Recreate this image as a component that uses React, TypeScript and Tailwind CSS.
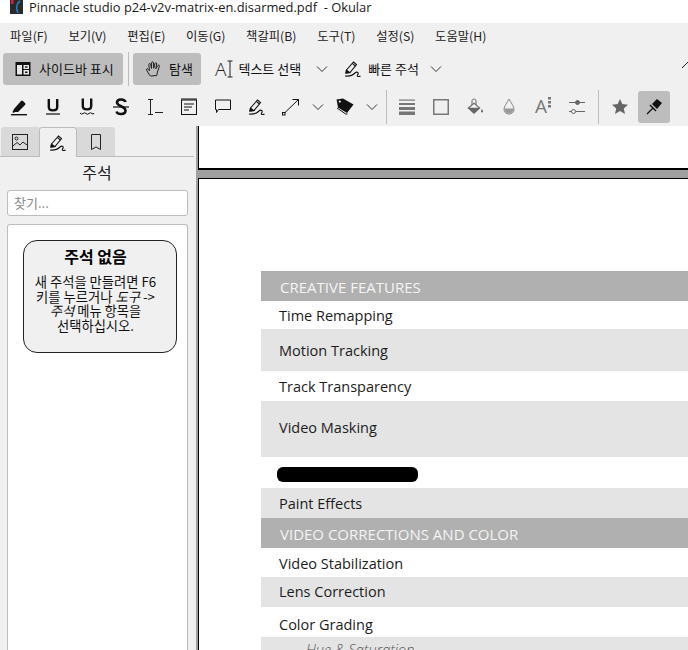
import type { ReactNode } from "react";

const KR = "font-['Noto_Sans_CJK_KR','Noto_Sans',sans-serif]";

function Chevron() {
  return (
    <svg width="12" height="8" viewBox="0 0 12 8" fill="none" stroke="#333" strokeWidth="1">
      <path d="M1 1.5 L6 6.5 L11 1.5" />
    </svg>
  );
}

function Freehand() {
  return (
    <svg width="18" height="18" viewBox="0 0 18 18" fill="none" stroke="#111" strokeWidth="1.1">
      <path d="M2.5 10 L9.5 2 L12.5 4.5 L6 12.5 L2 13 Z" />
      <path d="M8.3 3.4 L11.4 6" />
      <path d="M2.5 10.2 L5.8 12.6 L2 13 Z" fill="#111" />
      <path d="M1 16 C5 16.5 9 15 11 13 C13 11 15.5 13 13.5 15 C12.5 16.5 15 17 16.5 16" />
    </svg>
  );
}

function IconButton({ children, w = "w-[34px]" }: { children: ReactNode; w?: string }) {
  return <div className={`${w} h-[32px] flex items-center justify-center shrink-0`}>{children}</div>;
}

function Row({ h, gray, children }: { h: string; gray?: boolean; children: ReactNode }) {
  return (
    <div className={`${h} ${gray ? "bg-[#e4e4e4]" : "bg-white"} pl-[18px] pt-[2px] flex items-center text-[14.5px] text-[#1c1c1c]`}>
      {children}
    </div>
  );
}

function Header({ children }: { children: ReactNode }) {
  return (
    <div className="h-[30px] bg-[#b0b0b0] pl-[19px] pt-[2px] flex items-center text-[15px] text-[#f4f4f4]">{children}</div>
  );
}

const menus = ["파일(F)", "보기(V)", "편집(E)", "이동(G)", "책갈피(B)", "도구(T)", "설정(S)", "도움말(H)"];

export default function App() {
  return (
    <div className={`w-[688px] h-[650px] overflow-hidden flex flex-col bg-[#f0f0f0] text-[#111] ${KR}`}>
      {/* title bar */}
      <div className="h-[23px] bg-white flex shrink-0">
        <svg width="14" height="14" viewBox="0 0 14 14" className="ml-[10px]">
          <rect width="13" height="14" fill="#2a2a2a" />
          <rect x="1" width="2.5" height="4" fill="#c8243c" />
          <path d="M10 1 C6 4 6 9 8 13" fill="none" stroke="#1f7fd0" strokeWidth="1.6" />
        </svg>
        <span className="ml-[5px] text-[12.9px] leading-[15px] whitespace-pre font-['Open_Sans',sans-serif] text-[#1a1a1a]">
          Pinnacle studio p24-v2v-matrix-en.disarmed.pdf  - Okular
        </span>
      </div>

      {/* menu bar */}
      <div className="h-[27px] pl-[10px] flex items-center gap-[20.7px] text-[12.3px] text-[#222] shrink-0">
        {menus.map((m) => (
          <span key={m}>{m}</span>
        ))}
      </div>

      {/* main toolbar */}
      <div className="h-[39px] pl-[3px] pt-[3px] flex items-start shrink-0 relative text-[13px]">
        <div className="w-[120px] h-[32px] bg-[#bdbdbd] rounded-[3px] flex items-center pl-[12px] gap-[8px]">
          <svg width="16" height="16" viewBox="0 0 16 16">
            <rect x="0.5" y="1" width="15" height="14" fill="#111" />
            <rect x="2" y="4" width="5" height="9.5" fill="#e8e8e8" />
            <rect x="8.5" y="4" width="5.5" height="4" fill="#e8e8e8" />
            <rect x="10" y="5.3" width="2.5" height="1.4" fill="#111" />
            <rect x="8.5" y="9" width="5.5" height="4.5" fill="#e8e8e8" />
            <rect x="10" y="10.5" width="2.5" height="1.5" fill="#111" />
          </svg>
          <span>사이드바 표시</span>
        </div>
        <div className="w-px h-[34px] bg-[#bcbcbc] ml-[5px] -mt-[1px]" />
        <div className="w-[68px] h-[32px] ml-[4px] bg-[#bdbdbd] rounded-[3px] flex items-center pl-[12px] gap-[7px]">
          <svg width="17" height="18" viewBox="0 0 17 18" fill="none" stroke="#222" strokeWidth="1">
            <path d="M4.5 15 L1.5 10 C1 8.8 2.5 8.3 3.2 9.2 L4.5 10.8 L3.8 4.5 C3.7 3.2 5.5 3.2 5.7 4.4 L6.5 8.5 L6.6 2.8 C6.7 1.5 8.4 1.5 8.5 2.8 L8.7 8.3 L10 3.5 C10.3 2.3 12 2.7 11.7 4 L10.8 8.8 L12.8 5.5 C13.5 4.6 14.9 5.2 14.4 6.4 L12.4 12 L11.8 15.5 L5.5 16 Z" />
          </svg>
          <span>탐색</span>
        </div>
        <div className="flex items-center h-[32px] ml-[14px]">
          <span className="text-[19px] leading-none text-[#222] font-['Open_Sans',sans-serif] font-light">A</span>
          <svg width="6" height="18" viewBox="0 0 6 18" stroke="#222" fill="none" className="ml-[1px]">
            <path d="M0.5 1 H5.5 M3 1 V17 M0.5 17 H5.5" />
          </svg>
          <span className="ml-[5px]">텍스트 선택</span>
          <span className="ml-[15px] flex"><Chevron /></span>
          <span className="ml-[16px] flex"><Freehand /></span>
          <span className="ml-[6px]">빠른 주석</span>
          <span className="ml-[11px] flex"><Chevron /></span>
        </div>
        <svg width="6" height="8" viewBox="0 0 6 8" stroke="#222" fill="none" className="absolute right-0 top-[11px]">
          <path d="M0 7 L6 1" />
        </svg>
      </div>

      {/* annotation toolbar */}
      <div className="h-[35px] pl-[2px] flex items-center shrink-0">
        <IconButton>
          <svg width="18" height="18" viewBox="0 0 18 18">
            <path d="M4 11 L11 3 Q12 2 13 3 L15 5 Q16 6 15 7 L8 14 L5 14 L3.5 15 L2.5 14 Z" fill="#111" />
            <rect x="1" y="16" width="16" height="1.4" fill="#111" />
          </svg>
        </IconButton>
        <IconButton>
          <svg width="16" height="18" viewBox="0 0 16 18" fill="none" stroke="#111">
            <path d="M3.8 1 V9 C3.8 13.5 12.2 13.5 12.2 9 V1" strokeWidth="2.4" />
            <path d="M1 16 H15" strokeWidth="1.2" />
          </svg>
        </IconButton>
        <IconButton>
          <svg width="16" height="18" viewBox="0 0 16 18" fill="none" stroke="#111">
            <path d="M3.8 0.5 V8 C3.8 12.5 12.2 12.5 12.2 8 V0.5" strokeWidth="2.4" />
            <path d="M1 15 Q2.5 17 4 15.5 T7 15.5 T10 15.5 T13 15.5 T15 15" strokeWidth="1" />
          </svg>
        </IconButton>
        <IconButton>
          <svg width="16" height="18" viewBox="0 0 16 18" fill="none" stroke="#111">
            <path d="M12.5 4 C11.5 0.5 4 0.5 4 4.5 C4 8.5 12.5 8 12.5 12.5 C12.5 17 4.5 17 3.5 13.5" strokeWidth="2.6" />
            <path d="M0 9 H16" strokeWidth="1.2" stroke="#111" />
          </svg>
        </IconButton>
        <IconButton>
          <svg width="16" height="18" viewBox="0 0 16 18" fill="none" stroke="#222" strokeWidth="1">
            <path d="M1 1.5 H6 M3.5 1.5 V16.5 M1 16.5 H6 M8 14.5 H16" />
          </svg>
        </IconButton>
        <IconButton>
          <svg width="16" height="17" viewBox="0 0 16 17" fill="none" stroke="#111" strokeWidth="1">
            <rect x="0.5" y="2" width="15" height="14.5" />
            <path d="M0.5 1 H15.5" strokeDasharray="1 1" strokeWidth="2" />
            <path d="M3 6 H13 M3 9 H11 M3 12 H8" />
          </svg>
        </IconButton>
        <IconButton>
          <svg width="16" height="15" viewBox="0 0 16 15" fill="none" stroke="#111" strokeWidth="1">
            <path d="M0.5 1 H15.5 V10.5 H3.5 L1.5 13.5 V10.5 H0.5 Z" />
          </svg>
        </IconButton>
        <IconButton>
          <Freehand />
        </IconButton>
        <IconButton>
          <svg width="18" height="18" viewBox="0 0 18 18" fill="none" stroke="#111" strokeWidth="1">
            <rect x="0.5" y="14.5" width="2.5" height="2.5" />
            <path d="M3 14.5 L16.5 1.5 M10.5 1.5 H16.5 V7.5" />
          </svg>
        </IconButton>
        <IconButton w="w-[20px]">
          <Chevron />
        </IconButton>
        <IconButton>
          <svg width="18" height="17" viewBox="0 0 18 17">
            <path d="M0.5 1.5 L7 0.5 L17.5 6.5 L11 15 L2 9.5 Z" fill="#111" />
            <circle cx="3.8" cy="3.6" r="1.1" fill="#f0f0f0" />
            <path d="M1 10 L10 16.2 L11.5 15.8" stroke="#111" fill="none" />
          </svg>
        </IconButton>
        <IconButton w="w-[20px]">
          <Chevron />
        </IconButton>
        <div className="w-px h-[34px] bg-[#bcbcbc] ml-[4px] mr-[3px]" />
        <IconButton>
          <svg width="16" height="16" viewBox="0 0 16 16" fill="#777">
            <rect y="0.5" width="16" height="1.2" />
            <rect y="4" width="16" height="2" />
            <rect y="8" width="16" height="3" />
            <rect y="12.5" width="16" height="3.5" />
          </svg>
        </IconButton>
        <IconButton>
          <svg width="16" height="16" viewBox="0 0 16 16" fill="none" stroke="#777" strokeWidth="1.5">
            <rect x="0.75" y="0.75" width="14.5" height="14.5" />
          </svg>
        </IconButton>
        <IconButton>
          <svg width="17" height="18" viewBox="0 0 17 18">
            <path d="M5 7 V3 C5 0.5 9 0.5 9 3 V7" fill="none" stroke="#666" />
            <path d="M7 4.5 L13.5 10 L7 16 L0.5 10 Z" fill="#666" />
            <path d="M7 6 L11.5 9.7 H2.5 Z" fill="#f4f4f4" />
            <path d="M15 11 C13.8 13 13.8 14.5 15 14.5 C16.2 14.5 16.2 13 15 11 Z" fill="#555" />
          </svg>
        </IconButton>
        <IconButton>
          <svg width="12" height="17" viewBox="0 0 12 17">
            <path d="M6 1 C4 5 1 8 1 11.5 C1 14.5 3.5 16 6 16 C8.5 16 11 14.5 11 11.5 C11 8 8 5 6 1 Z" fill="#f0f0f0" stroke="#888" />
            <path d="M1.5 10.5 H10.5 C11 14 8.5 15.5 6 15.5 C3.5 15.5 1 14 1.5 10.5 Z" fill="#999" />
          </svg>
        </IconButton>
        <IconButton>
          <div className="flex items-start">
            <span className="text-[19px] leading-none text-[#777] font-['Open_Sans',sans-serif]">A</span>
            <svg width="3" height="12" viewBox="0 0 3 12" fill="#777" className="ml-[1px]">
              <rect width="3" height="2.5" />
              <rect y="4" width="3" height="2.5" />
              <rect y="8" width="3" height="2.5" />
            </svg>
          </div>
        </IconButton>
        <IconButton>
          <svg width="16" height="16" viewBox="0 0 16 16" fill="none" stroke="#666">
            <path d="M0 3.5 H16 M0 12.5 H2.5 M6.5 12.5 H16" />
            <circle cx="8.5" cy="3.5" r="2" fill="#666" />
            <circle cx="4.5" cy="12.5" r="2" />
          </svg>
        </IconButton>
        <div className="w-px h-[34px] bg-[#bcbcbc] ml-[4px] mr-[4px]" />
        <IconButton>
          <svg width="16" height="15" viewBox="0 0 16 15" fill="#666">
            <path d="M8 0 L10.3 5 L16 5.7 L11.8 9.4 L13 15 L8 12.1 L3 15 L4.2 9.4 L0 5.7 L5.7 5 Z" />
          </svg>
        </IconButton>
        <div className="w-[32px] h-[32px] ml-[1px] bg-[#bdbdbd] rounded-[3px] flex items-center justify-center">
          <svg width="17" height="17" viewBox="0 0 17 17">
            <path d="M6 6 L11 1 L16 5 L11 11 Z" fill="#111" />
            <path d="M4 7 L10 13" stroke="#111" strokeWidth="1.4" />
            <path d="M7 10 L1 16" stroke="#111" strokeWidth="1.2" />
          </svg>
        </div>
      </div>

      <div className="flex-1 min-h-0 flex mt-[2px]">
        {/* sidebar */}
        <div className="w-[194px] shrink-0 flex flex-col">
          <div className="h-[31px] pl-px pt-[2px] flex items-end border-b border-[#bcbcbc]">
            <div className="w-[38px] h-[29px] bg-[#d9d9d9] rounded-tl-[3px] flex items-center justify-center">
              <svg width="16" height="16" viewBox="0 0 16 16" fill="none" stroke="#222">
                <rect x="0.5" y="0.5" width="15" height="15" />
                <circle cx="4.5" cy="4.5" r="1.5" />
                <path d="M1 12 L5 8.5 L8 11 L11 8 L15 11" />
              </svg>
            </div>
            <div className="w-[38px] h-[30px] -mb-px bg-[#f0f0f0] border border-b-0 border-[#bcbcbc] rounded-t-[3px] flex items-center justify-center">
              <Freehand />
            </div>
            <div className="w-[38px] h-[29px] bg-[#d9d9d9] rounded-tr-[3px] flex items-center justify-center">
              <svg width="10" height="16" viewBox="0 0 10 16" fill="none" stroke="#222">
                <path d="M0.5 0.5 H9.5 V15.5 L5 13 L0.5 15.5 Z" />
              </svg>
            </div>
          </div>
          <div className="h-[33px] pb-[3px] flex items-center justify-center text-[16px] text-[#222]">주석</div>
          <div className="ml-[7px] mr-[6px] h-[26px] bg-white border border-[#bcbcbc] rounded-[3px] pl-[6px] flex items-center text-[13px] text-[#8a8a8a]">
            찾기...
          </div>
          <div className="ml-[7px] mr-[6px] mt-[8px] flex-1 bg-white border border-b-0 border-[#bcbcbc] rounded-t-[3px] pt-[15px] pl-[15px]">
            <div className="w-[154px] h-[113px] bg-[#f0f0f0] border border-[#222] rounded-[14px] flex flex-col items-center pt-[5px] pr-[9px] text-center">
              <div className="text-[16px] leading-[20px] font-bold text-black">주석 없음</div>
              <div className="mt-[9px] text-[13.3px] leading-[14.5px] text-[#111] whitespace-nowrap">
                새 주석을 만들려면 F6
                <br />
                키를 누르거나 <i>도구</i> -&gt;
                <br />
                <i>주석</i> 메뉴 항목을
                <br />
                선택하십시오.
              </div>
            </div>
          </div>
        </div>

        {/* document view */}
        <div className="flex-1 min-w-0 ml-[2px] pl-[2px] bg-[#a0a0a0] flex flex-col">
          <div className="h-[44px] bg-white border-l border-b-2 border-black shrink-0" />
          <div className="flex-1 mt-[8px] bg-white border-l border-t border-black pt-[92px] pl-[62px] font-['Open_Sans',sans-serif]">
            <Header>CREATIVE FEATURES</Header>
            <Row h="h-[28px]">Time Remapping</Row>
            <Row h="h-[42px]" gray>Motion Tracking</Row>
            <Row h="h-[30px]">Track Transparency</Row>
            <div className="h-[56px] bg-[#e4e4e4] pl-[18px] pt-[17px] text-[14.5px] leading-[20px] text-[#1c1c1c]">Video Masking</div>
            <Row h="h-[31px]">
              <div className="w-[141px] h-[15px] bg-black rounded-[6px] -ml-[2px] mt-[2px]" />
            </Row>
            <Row h="h-[30px]" gray>Paint Effects</Row>
            <Header>VIDEO CORRECTIONS AND COLOR</Header>
            <Row h="h-[29px]">Video Stabilization</Row>
            <Row h="h-[30px]" gray>
              <span className="-mt-[2px]">Lens Correction</span>
            </Row>
            <Row h="h-[30px]">
              <span className="mt-[3px]">Color Grading</span>
            </Row>
            <div className="h-[30px] bg-[#e4e4e4] pl-[45px] pt-[3px] text-[14.5px] leading-[20px] italic font-light text-[#555]">Hue &amp; Saturation</div>
          </div>
        </div>
      </div>
    </div>
  );
}
